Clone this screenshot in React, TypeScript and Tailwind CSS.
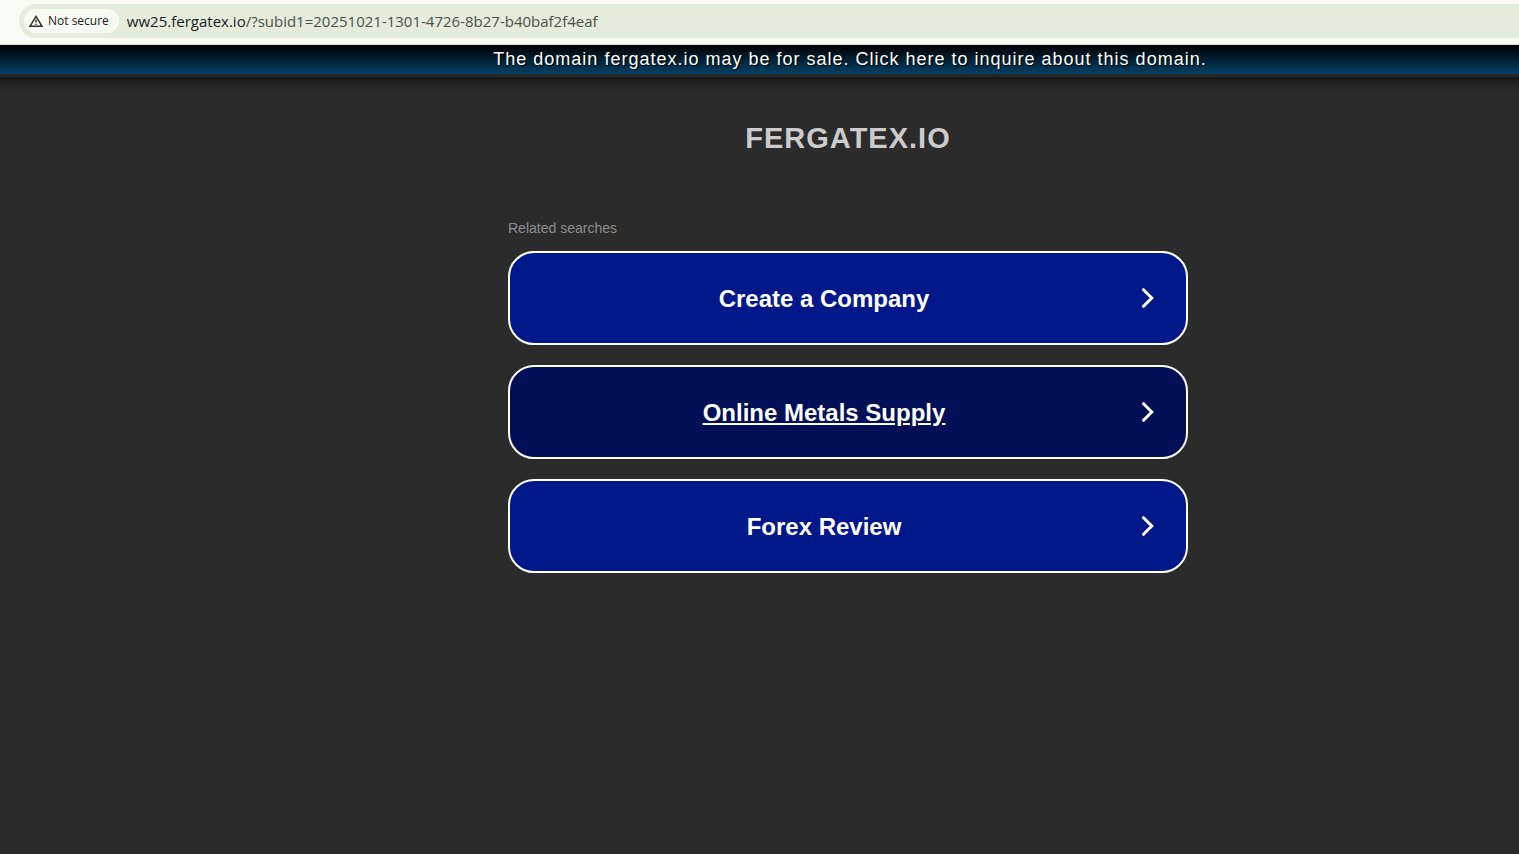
import { useState } from "react";

const searches = ["Create a Company", "Online Metals Supply", "Forex Review"];

function WarningIcon() {
  return (
    <svg viewBox="0 0 14 12" className="h-3 w-3.5 shrink-0" fill="none" aria-hidden="true">
      <path d="M7 1.4 13 11.3H1Z" stroke="#2b312b" strokeWidth="1.4" strokeLinejoin="miter" />
      <path d="M7 4.6v3.2M7 8.8v1.2" stroke="#2b312b" strokeWidth="1.3" />
    </svg>
  );
}

function Chevron() {
  return (
    <svg viewBox="0 0 24 24" className="size-6 shrink-0" fill="none" aria-hidden="true">
      <path
        d="m7.5 3.7 8.3 8.3-8.3 8.3"
        stroke="#fff"
        strokeWidth="3"
        strokeLinecap="round"
      />
    </svg>
  );
}

function AddressBar() {
  const [path, setPath] = useState("/?subid1=20251021-1301-4726-8b27-b40baf2f4eaf");
  return (
    <header className="relative z-10 flex h-[45px] border-b border-[#d9ddd3] bg-[#f8fbf1] pt-1 pl-[19px] font-['Open_Sans','Noto_Sans',sans-serif]">
      <div className="flex h-[34px] flex-1 items-center rounded-l-full bg-[#e4eddc] pl-[5px]">
        <button
          type="button"
          className="flex h-6 items-center gap-[5px] rounded-full bg-[#f8fbf1] pr-2.5 pl-[5px] text-[12px] text-[#1b201b]"
        >
          <WarningIcon />
          Not secure
        </button>
        <label htmlFor="url" className="ml-2 text-[15px] leading-5 text-[#1b201b]">
          ww25.fergatex.io
        </label>
        <input
          id="url"
          type="text"
          value={path}
          onChange={(e) => setPath(e.target.value)}
          className="h-5 min-w-0 flex-1 bg-transparent text-[15px] leading-5 text-[#4b5148] outline-none"
        />
      </div>
    </header>
  );
}

export default function App() {
  return (
    <div className="min-h-screen overflow-x-clip bg-[#2b2b2b] font-['Liberation_Sans',Arial,sans-serif]">
      <AddressBar />
      <div className="-mx-4 border-b-[3px] border-[#262626] bg-linear-to-b/srgb from-black to-[#044066] bg-clip-padding pr-4 pl-[197px] text-center shadow-[0_0_15px_#000]">
        <a
          href="#inquire"
          className="block text-[18px] leading-[29px] tracking-[1px] text-white [text-shadow:1px_1px_1px_#000]"
        >
          The domain fergatex.io may be for sale. Click here to inquire about this domain.
        </a>
      </div>
      <main className="flex flex-col items-center pt-[41px] pl-[177px]">
        <h1 className="text-[29px] leading-10 font-bold tracking-[1px] text-[#ccc] uppercase">
          Fergatex.io
        </h1>
        <section className="mt-[61px] w-full max-w-[680px]">
          <h2 className="text-[14px] leading-[18px] text-[#8e8e8e]">Related searches</h2>
          <ul className="mt-3.5 flex flex-col gap-5">
            {searches.map((title, i) => (
              <li key={title}>
                <a
                  href="#search"
                  className={
                    "flex h-[94px] items-center rounded-[26px] border-2 border-white pr-[26px] pl-0.5 text-[24px] font-bold text-white " +
                    (i === 1 ? "bg-[#010f57] underline" : "bg-[#01188a] hover:bg-[#010f57] hover:underline")
                  }
                >
                  <span className="flex-1 pt-0.5 text-center">{title}</span>
                  <Chevron />
                </a>
              </li>
            ))}
          </ul>
        </section>
      </main>
    </div>
  );
}
